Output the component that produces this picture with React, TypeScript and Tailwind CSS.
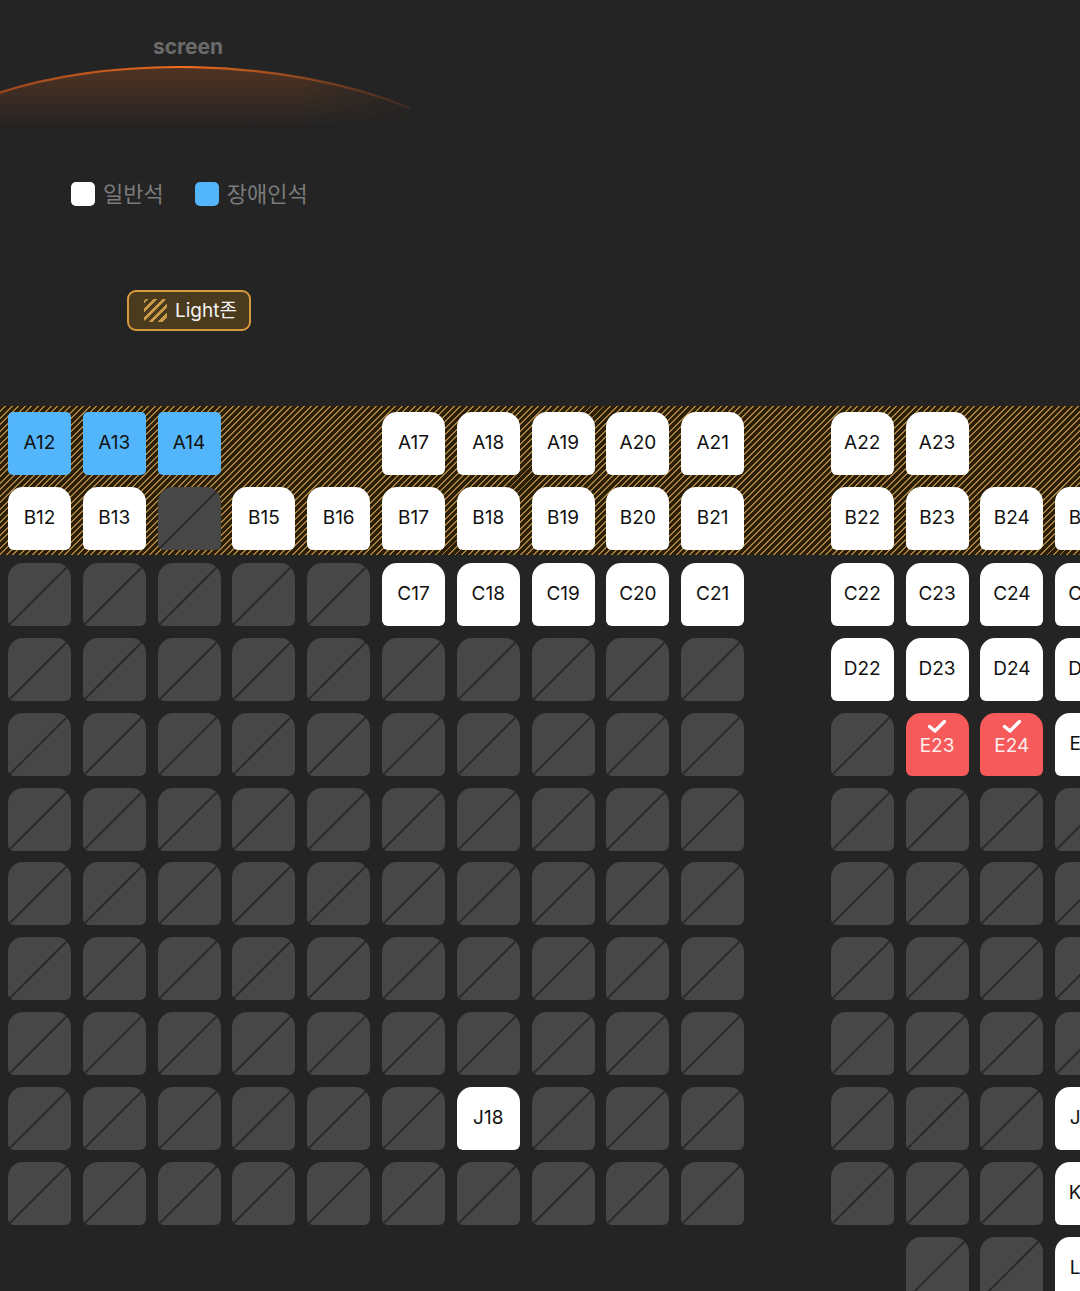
import React from 'react';

type Cell = 'h' | 'w' | 'x' | 's' | '_';

// 15 columns per row, col 10 is the aisle
const rows: { label: string; cells: Cell[] }[] = [
  { label: 'A', cells: ['h', 'h', 'h', '_', '_', 'w', 'w', 'w', 'w', 'w', '_', 'w', 'w', '_', '_'] },
  { label: 'B', cells: ['w', 'w', 'x', 'w', 'w', 'w', 'w', 'w', 'w', 'w', '_', 'w', 'w', 'w', 'w'] },
  { label: 'C', cells: ['x', 'x', 'x', 'x', 'x', 'w', 'w', 'w', 'w', 'w', '_', 'w', 'w', 'w', 'w'] },
  { label: 'D', cells: ['x', 'x', 'x', 'x', 'x', 'x', 'x', 'x', 'x', 'x', '_', 'w', 'w', 'w', 'w'] },
  { label: 'E', cells: ['x', 'x', 'x', 'x', 'x', 'x', 'x', 'x', 'x', 'x', '_', 'x', 's', 's', 'w'] },
  { label: 'F', cells: ['x', 'x', 'x', 'x', 'x', 'x', 'x', 'x', 'x', 'x', '_', 'x', 'x', 'x', 'x'] },
  { label: 'G', cells: ['x', 'x', 'x', 'x', 'x', 'x', 'x', 'x', 'x', 'x', '_', 'x', 'x', 'x', 'x'] },
  { label: 'H', cells: ['x', 'x', 'x', 'x', 'x', 'x', 'x', 'x', 'x', 'x', '_', 'x', 'x', 'x', 'x'] },
  { label: 'I', cells: ['x', 'x', 'x', 'x', 'x', 'x', 'x', 'x', 'x', 'x', '_', 'x', 'x', 'x', 'x'] },
  { label: 'J', cells: ['x', 'x', 'x', 'x', 'x', 'x', 'w', 'x', 'x', 'x', '_', 'x', 'x', 'x', 'w'] },
  { label: 'K', cells: ['x', 'x', 'x', 'x', 'x', 'x', 'x', 'x', 'x', 'x', '_', 'x', 'x', 'x', 'w'] },
  { label: 'L', cells: ['_', '_', '_', '_', '_', '_', '_', '_', '_', '_', '_', '_', 'x', 'x', 'w'] },
];

const seatNo = (col: number) => (col < 10 ? 12 + col : 11 + col);

const Seat: React.FC<{ type: Cell; name: string }> = ({ type, name }) => {
  if (type === '_') return <div className="w-[63px] h-[63px] shrink-0" />;

  if (type === 'h') {
    return (
      <div className="w-[63px] h-[63px] shrink-0 rounded-[5px] bg-[#53b5fb] flex items-center justify-center text-[19px] text-[#111]">
        {name}
      </div>
    );
  }

  if (type === 'x') {
    return (
      <div className="relative w-[63px] h-[63px] shrink-0 rounded-t-[15px] rounded-b-[6px] bg-[#474747] overflow-hidden">
        <svg className="absolute inset-0" width="63" height="63" viewBox="0 0 63 63">
          <line x1="0" y1="63" x2="63" y2="0" stroke="#262626" strokeWidth="1.6" />
        </svg>
      </div>
    );
  }

  if (type === 's') {
    return (
      <div className="w-[63px] h-[63px] shrink-0 rounded-t-[15px] rounded-b-[6px] bg-[#f65a5a] flex flex-col items-center pt-[6px] text-[#fdeeee]">
        <svg width="22" height="15" viewBox="0 0 22 15">
          <path d="M3.5 7.5 L9 12 L18.5 2.5" fill="none" stroke="#ffffff" strokeWidth="3.4" strokeLinecap="round" strokeLinejoin="round" />
        </svg>
        <span className="text-[19px] leading-[22px] mt-[1px]">{name}</span>
      </div>
    );
  }

  return (
    <div className="w-[63px] h-[63px] shrink-0 rounded-t-[15px] rounded-b-[6px] bg-white flex items-center justify-center text-[19px] text-[#111]">
      {name}
    </div>
  );
};

const SeatRow: React.FC<{ label: string; cells: Cell[] }> = ({ label, cells }) => (
  <div className="flex gap-x-[11.8px]">
    {cells.map((c, i) => (
      <Seat key={i} type={c} name={`${label}${seatNo(i)}`} />
    ))}
  </div>
);

export default function App() {
  return (
    <div
      className="w-full min-h-[1291px] bg-[#242424] overflow-hidden"
      style={{ fontFamily: 'Inter, "Noto Sans CJK KR", sans-serif' }}
    >
      {/* screen */}
      <div className="w-[420px] pt-[34px] flex flex-col items-center">
        <div className="text-[21px] leading-[26px] font-bold text-[#6b6b6b] ml-[-44px]">screen</div>
        <svg width="440" height="70" viewBox="0 0 440 70" className="-mt-[2px]">
          <defs>
            <linearGradient id="glow" x1="0" y1="0" x2="0" y2="1">
              <stop offset="0" stopColor="#e0641c" stopOpacity="0.24" />
              <stop offset="1" stopColor="#e0641c" stopOpacity="0" />
            </linearGradient>
            <linearGradient id="line" x1="0" y1="0" x2="1" y2="0">
              <stop offset="0" stopColor="#b8501a" stopOpacity="0.7" />
              <stop offset="0.45" stopColor="#f36c1e" />
              <stop offset="1" stopColor="#b8501a" stopOpacity="0.15" />
            </linearGradient>
            <linearGradient id="fadeX" x1="0" y1="0" x2="1" y2="0">
              <stop offset="0" stopColor="#fff" stopOpacity="1" />
              <stop offset="0.7" stopColor="#fff" stopOpacity="1" />
              <stop offset="1" stopColor="#fff" stopOpacity="0" />
            </linearGradient>
            <mask id="m">
              <rect x="0" y="0" width="440" height="70" fill="url(#fadeX)" />
            </mask>
          </defs>
          <path d="M0 38 C 110 -2, 290 -3, 420 50 L420 70 L0 70 Z" fill="url(#glow)" mask="url(#m)" />
          <path d="M0 38 C 110 -2, 290 -3, 420 50" fill="none" stroke="url(#line)" strokeWidth="2.2" />
        </svg>
      </div>

      {/* legend */}
      <div className="flex items-center ml-[71px] mt-[54px] text-[22px] text-[#7b7b7b]">
        <div className="flex items-center gap-[8px]">
          <span className="w-[24px] h-[24px] rounded-[5px] bg-white" />
          <span className="leading-[24px]">일반석</span>
        </div>
        <div className="flex items-center gap-[8px] ml-[31px]">
          <span className="w-[24px] h-[24px] rounded-[5px] bg-[#53b5fb]" />
          <span className="leading-[24px]">장애인석</span>
        </div>
      </div>

      {/* light zone badge */}
      <div className="ml-[127px] mt-[84px] w-[124px] h-[41px] rounded-[9px] border-2 border-[#d69a3c] bg-[#4a3a1e] flex items-center gap-[8px] pl-[15px]">
        <span className="w-[23px] h-[23px] rounded-[3px] bg-[repeating-linear-gradient(135deg,#c99a48_0px,#c99a48_3px,#4a3a1e_3px,#4a3a1e_6.5px)]" />
        <span className="text-[19px] leading-[24px] text-[#f3f3f3]">Light존</span>
      </div>

      {/* seat map */}
      <div className="mt-[75px] w-[1200px]">
        <div className="pt-[6px] pb-[5px] pl-[8px] flex flex-col gap-y-[11.9px] bg-[repeating-linear-gradient(135deg,#2b1f08_0px,#2b1f08_3.2px,#a98240_3.2px,#a98240_4.6px)]">
          <SeatRow {...rows[0]} />
          <SeatRow {...rows[1]} />
        </div>
        <div className="pt-[8px] pl-[8px] pb-[40px] flex flex-col gap-y-[11.9px]">
          {rows.slice(2).map((r) => (
            <SeatRow key={r.label} {...r} />
          ))}
        </div>
      </div>
    </div>
  );
}
